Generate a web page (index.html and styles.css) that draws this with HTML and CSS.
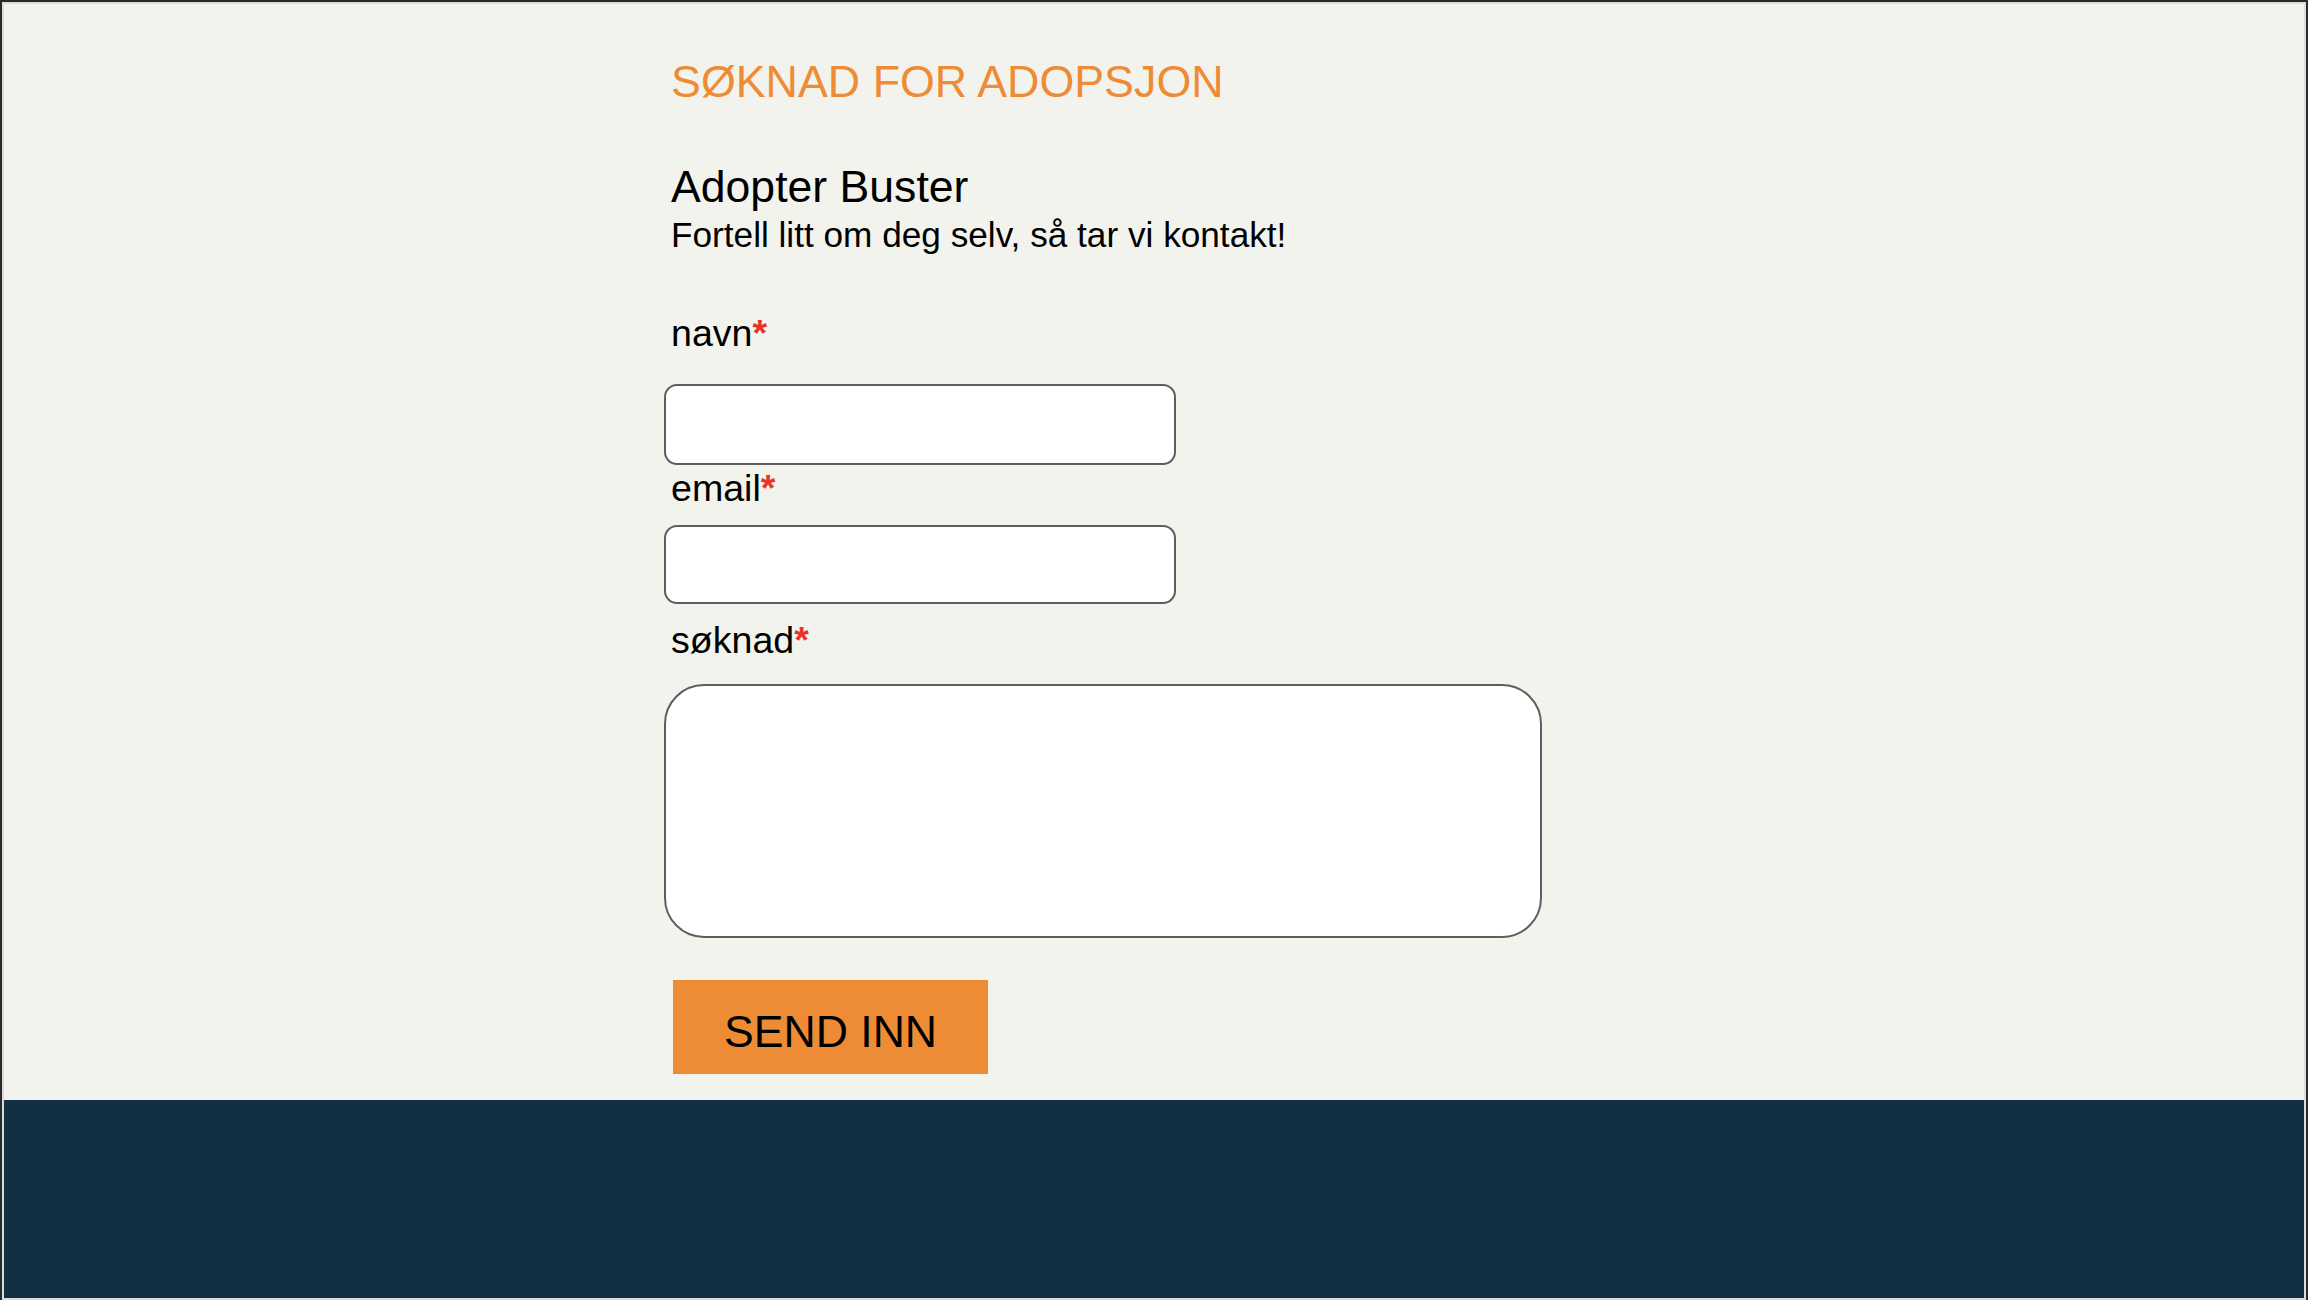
FILE: index.html
```html
<!DOCTYPE html>
<html lang="no">
<head>
<meta charset="utf-8">
<title>Søknad for adopsjon</title>
<link rel="stylesheet" href="styles.css">
</head>
<body>
<div class="frame">
  <main class="content">
    <h1 class="title">SØKNAD FOR ADOPSJON</h1>
    <h2 class="heading">Adopter Buster</h2>
    <p class="lead">Fortell litt om deg selv, så tar vi kontakt!</p>
    <form class="form">
      <label class="label label-navn" for="navn">navn<span class="req">*</span></label>
      <input class="field field-navn" id="navn" type="text">
      <label class="label label-email" for="email">email<span class="req">*</span></label>
      <input class="field field-email" id="email" type="email">
      <label class="label label-soknad" for="soknad">søknad<span class="req">*</span></label>
      <textarea class="area" id="soknad"></textarea>
      <button class="submit" type="button">SEND INN</button>
    </form>
  </main>
  <footer class="footer"></footer>
</div>
</body>
</html>
```

FILE: styles.css
```css
* { box-sizing: border-box; }
html, body {
  margin: 0;
  padding: 0;
  background: #2a2a2a;
  height: 1300px;
  overflow: hidden;
}
body {
  font-family: "Liberation Sans", Arial, sans-serif;
  color: #000;
}
.frame {
  margin: 2px 2px 0 2px;
  border: 2px solid #dcdcdc;
  height: 1298px;
  background: #f3f3ee;
  display: flex;
  flex-direction: column;
}
.content {
  padding: 53px 0 0 660px;
  display: flex;
  flex-direction: column;
  align-items: flex-start;
}
.title {
  margin: 0 0 58px 7px;
  font-size: 44.8px;
  line-height: 48px;
  font-weight: 400;
  color: #ee8b35;
}
.heading {
  margin: 0 0 4px 7px;
  font-size: 44.6px;
  line-height: 48px;
  font-weight: 400;
}
.lead {
  margin: 0 0 58px 7px;
  font-size: 35.2px;
  line-height: 40px;
}
.form {
  display: flex;
  flex-direction: column;
  align-items: flex-start;
}
.label {
  margin-left: 7px;
  font-size: 37.6px;
  line-height: 40px;
}
.req {
  color: #e8342b;
  font-weight: 700;
}
.label-navn { margin-bottom: 31px; }
.label-email { margin-top: 3px; margin-bottom: 17px; }
.label-soknad { margin-top: 16px; margin-bottom: 24px; }
.field {
  width: 512px;
  height: 81px;
  border: 2px solid #5e5e5e;
  border-radius: 13px;
  background: #fff;
  font: inherit;
  font-size: 30px;
  padding: 0 14px;
}
.field-email { height: 79px; }
.area {
  width: 878px;
  height: 254px;
  border: 2px solid #5e5e5e;
  border-radius: 40px;
  background: #fff;
  resize: none;
  font: inherit;
  font-size: 30px;
  padding: 20px;
}
.submit {
  margin: 42px 0 0 9px;
  width: 315px;
  height: 94px;
  border: none;
  background: #ed8c35;
  color: #000;
  font-family: "Liberation Sans", Arial, sans-serif;
  font-size: 44.6px;
  padding: 10px 0 0;
}
.footer {
  margin-top: 26px;
  flex: 1;
  background: #132f44;
}
```
